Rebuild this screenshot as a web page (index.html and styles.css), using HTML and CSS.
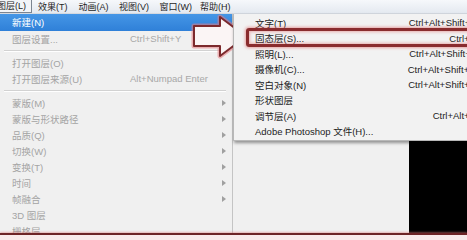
FILE: index.html
```html
<!DOCTYPE html>
<html>
<head>
  <meta charset="utf-8">
  <link rel="stylesheet" href="styles.css">
</head>
<body>
  <div class="screen">
    <div class="menubar">
      <span class="mb-item active">图层(L)</span>
      <span class="mb-item">效果(T)</span>
      <span class="mb-item">动画(A)</span>
      <span class="mb-item">视图(V)</span>
      <span class="mb-item">窗口(W)</span>
      <span class="mb-item">帮助(H)</span>
    </div>

    <div class="work">
      <!-- Layer menu -->
      <div class="menu">
        <div class="item hot"><span class="label">新建(N)</span></div>
        <div class="item"><span class="label">图层设置...</span><span class="key">Ctrl+Shift+Y</span></div>
        <div class="sep"></div>
        <div class="item"><span class="label">打开图层(O)</span></div>
        <div class="item"><span class="label">打开图层来源(U)</span><span class="key">Alt+Numpad Enter</span></div>
        <div class="sep"></div>
        <div class="item"><span class="label">蒙版(M)</span><span class="arrow"></span></div>
        <div class="item"><span class="label">蒙版与形状路径</span><span class="arrow"></span></div>
        <div class="item"><span class="label">品质(Q)</span><span class="arrow"></span></div>
        <div class="item"><span class="label">切换(W)</span><span class="arrow"></span></div>
        <div class="item"><span class="label">变换(T)</span><span class="arrow"></span></div>
        <div class="item"><span class="label">时间</span><span class="arrow"></span></div>
        <div class="item"><span class="label">帧融合</span><span class="arrow"></span></div>
        <div class="item"><span class="label">3D 图层</span></div>
        <div class="item"><span class="label">栅格层</span></div>
      </div>

      <div class="side">
        <!-- New submenu -->
        <div class="submenu">
          <div class="sub-item"><span>文字(T)</span><span class="sub-key">Ctrl+Alt+Shift+T</span></div>
          <div class="sub-item marked"><span>固态层(S)...</span><span class="sub-key">Ctrl+Y</span></div>
          <div class="sub-item"><span>照明(L)...</span><span class="sub-key">Ctrl+Alt+Shift+L</span></div>
          <div class="sub-item"><span>摄像机(C)...</span><span class="sub-key">Ctrl+Alt+Shift+C</span></div>
          <div class="sub-item"><span>空白对象(N)</span><span class="sub-key">Ctrl+Alt+Shift+Y</span></div>
          <div class="sub-item"><span>形状图层</span></div>
          <div class="sub-item"><span>调节层(A)</span><span class="sub-key">Ctrl+Alt+Y</span></div>
          <div class="sub-item"><span>Adobe Photoshop 文件(H)...</span></div>
        </div>
        <div class="below">
          <div class="panel"></div>
          <div class="comp"></div>
        </div>
      </div>
    </div>

    <svg class="pointer" width="70" height="56" viewBox="0 0 70 56">
      <polygon class="glow" points="9,16 35,16 35,7 61,26.5 35,46 35,36 9,36"/>
      <polygon class="outline" points="9,16 35,16 35,7 61,26.5 35,46 35,36 9,36"/>
    </svg>

    <div class="bottom-mark"></div>
  </div>
</body>
</html>
```

FILE: styles.css
```css
body {
  margin: 0;
  background: #f0f0f0;
  font-family: "Liberation Sans", "Noto Sans CJK SC", sans-serif;
  font-size: 9.5px;
}

.screen {
  position: relative;
  width: 467px;
  height: 240px;
  overflow: hidden;
  display: flex;
  flex-direction: column;
}

/* Menu bar */
.menubar {
  height: 13px;
  display: flex;
  align-items: center;
  background: linear-gradient(#f6f8fb, #e4e9f0);
  border-bottom: 1px solid #d4d9e0;
  color: #1e1e1e;
  font-size: 9px;
  flex-shrink: 0;
}

.mb-item {
  line-height: 12px;
  width: 40.5px;
  white-space: nowrap;
  flex-shrink: 0;
}

.mb-item.active {
  width: 35px;
  margin-left: -3px;
  margin-right: 6px;
  box-sizing: border-box;
  border-right: 1px solid #7c8591;
  border-bottom: 1px solid #7c8591;
  background: #f2f4f7;
}

.work {
  flex: 1;
  display: flex;
  min-height: 0;
}

/* Layer menu */
.menu {
  width: 233px;
  box-sizing: border-box;
  border-right: 1px solid #c4c4c4;
  background: #f0f0f0;
  flex-shrink: 0;
}

.item {
  height: 16px;
  display: flex;
  align-items: center;
  padding-left: 12px;
  padding-right: 4px;
  color: #a4a4a4;
  white-space: nowrap;
}

.item.hot {
  height: 16.5px;
  background: linear-gradient(#4596e6, #2f80d8);
  color: #fff;
}

.label {
  width: 118px;
  flex-shrink: 0;
}

.key {
  color: #a8a8a8;
}

.arrow {
  margin-left: auto;
  margin-right: 2px;
  width: 0;
  height: 0;
  border-top: 3px solid transparent;
  border-bottom: 3px solid transparent;
  border-left: 4px solid #a0a0a0;
}

.sep {
  height: 8px;
  display: flex;
  align-items: center;
  padding: 0 6px 0 4px;
}

.sep::before {
  content: "";
  flex: 1;
  border-top: 1px solid #d2d2d2;
  border-bottom: 1px solid #fff;
}

/* New submenu */
.side {
  flex: 1;
  display: flex;
  flex-direction: column;
  min-width: 0;
}

.submenu {
  width: 262px;
  box-sizing: border-box;
  padding: 1px 18px 1px 0;
  background: #f2f2f2;
  border: 1px solid #b8b8b8;
  border-top: none;
  box-shadow: 1px 2px 3px rgba(0, 0, 0, 0.4);
  position: relative;
  z-index: 1;
}

.sub-item {
  height: 15.5px;
  display: flex;
  align-items: center;
  justify-content: space-between;
  padding-left: 21px;
  color: #1c1c1c;
  white-space: nowrap;
  position: relative;
}

.sub-key {
  color: #222;
}

.sub-item.marked::after {
  content: "";
  position: absolute;
  left: 12px;
  top: -3px;
  bottom: -1px;
  right: -30px;
  border: 3px solid #8a2c2e;
  border-radius: 3px;
  box-shadow: 0 0 3px 1px rgba(225, 110, 110, 0.6), inset 0 0 3px 1px rgba(225, 110, 110, 0.5);
}

.below {
  flex: 1;
  display: flex;
}

.panel {
  width: 176px;
  background: #f0f0f0;
}

.comp {
  flex: 1;
  background: #000;
}

/* Annotation overlays */
.pointer {
  position: absolute;
  left: 185px;
  top: 10px;
}

.pointer .glow {
  fill: none;
  stroke: rgba(230, 120, 125, 0.55);
  stroke-width: 5;
  stroke-linejoin: round;
}

.pointer .outline {
  fill: #fbf5f5;
  stroke: #7c2a2d;
  stroke-width: 2;
  stroke-linejoin: round;
}

.bottom-mark {
  position: absolute;
  left: 0;
  right: 0;
  bottom: 0;
  height: 5px;
  border-top: 2px solid #6e2426;
  background: #f9eaea;
  box-shadow: 0 -1px 2px rgba(220, 120, 120, 0.5);
}
```
